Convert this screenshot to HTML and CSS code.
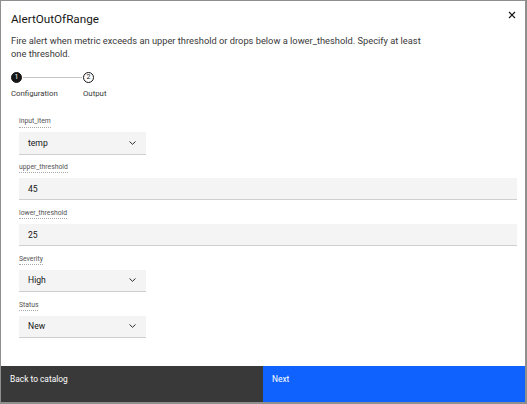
FILE: index.html
```html
<!DOCTYPE html>
<html>
<head>
<meta charset="utf-8">
<link rel="stylesheet" href="styles.css">
</head>
<body>
<div class="modal">
  <div class="header">
    <h1 class="title">AlertOutOfRange</h1>
    <span class="close" aria-label="Close">
      <svg width="8" height="8" viewBox="0 0 8 8"><path d="M1 1L7 7M7 1L1 7" stroke="#161616" stroke-width="1.1" fill="none"/></svg>
    </span>
  </div>
  <p class="desc">Fire alert when metric exceeds an upper threshold or drops below a lower_theshold. Specify at least one threshold.</p>
  <div class="steps">
    <div class="step">
      <div class="step-row"><span class="num current">1</span><span class="line"></span></div>
      <span class="step-label">Configuration</span>
    </div>
    <div class="step">
      <div class="step-row"><span class="num">2</span></div>
      <span class="step-label">Output</span>
    </div>
  </div>
  <div class="form">
    <div class="field">
      <span class="label">input_item</span>
      <div class="control select"><span>temp</span><svg class="chev" width="7" height="4" viewBox="0 0 7 4"><path d="M0.5 0.5L3.5 3.3L6.5 0.5" stroke="#161616" stroke-width="0.9" fill="none"/></svg></div>
    </div>
    <div class="field">
      <span class="label">upper_threshold</span>
      <div class="control input"><span>45</span></div>
    </div>
    <div class="field">
      <span class="label">lower_threshold</span>
      <div class="control input"><span>25</span></div>
    </div>
    <div class="field">
      <span class="label">Severity</span>
      <div class="control select"><span>High</span><svg class="chev" width="7" height="4" viewBox="0 0 7 4"><path d="M0.5 0.5L3.5 3.3L6.5 0.5" stroke="#161616" stroke-width="0.9" fill="none"/></svg></div>
    </div>
    <div class="field">
      <span class="label">Status</span>
      <div class="control select"><span>New</span><svg class="chev" width="7" height="4" viewBox="0 0 7 4"><path d="M0.5 0.5L3.5 3.3L6.5 0.5" stroke="#161616" stroke-width="0.9" fill="none"/></svg></div>
    </div>
  </div>
  <div class="footer">
    <div class="btn secondary">Back to catalog</div>
    <div class="btn primary">Next</div>
  </div>
</div>
</body>
</html>
```
FILE: styles.css
```css
html, body {
  margin: 0;
  padding: 0;
  background: #ffffff;
}
body {
  font-family: Roboto, "Liberation Sans", sans-serif;
  color: #161616;
}
.modal {
  box-sizing: border-box;
  width: 527px;
  height: 404px;
  border-top: 1px solid #8f8f8f;
  border-left: 1px solid #8f8f8f;
  border-right: 2px solid #8f8f8f;
  border-bottom: 2px solid #8f8f8f;
  display: flex;
  flex-direction: column;
  background: #fff;
}
.header {
  display: flex;
  justify-content: space-between;
  align-items: flex-start;
  padding: 10px 9px 0 10px;
}
.title {
  margin: 0;
  font-size: 11.7px;
  line-height: 16px;
  font-weight: 400;
  color: #161616;
}
.close {
  display: flex;
  margin-top: 0;
}
.desc {
  margin: 7px 0 0 10px;
  width: 425px;
  font-size: 9.3px;
  line-height: 13px;
  color: #393939;
}
.steps {
  display: flex;
  margin: 11.5px 0 0 10px;
}
.step {
  display: flex;
  flex-direction: column;
  width: 72px;
}
.step-row {
  display: flex;
  align-items: center;
  height: 11px;
}
.num {
  box-sizing: border-box;
  width: 11px;
  height: 11px;
  border-radius: 50%;
  border: 1.2px solid #161616;
  font-size: 7px;
  line-height: 9px;
  text-align: center;
  color: #161616;
  flex: none;
}
.num.current {
  background: #161616;
  color: #fff;
}
.line {
  flex: 1;
  height: 1px;
  background: #c6c6c6;
  margin: 0 1px;
}
.step-label {
  margin-top: 5px;
  font-size: 7.8px;
  line-height: 11px;
  color: #393939;
}
.form {
  display: flex;
  flex-direction: column;
  padding: 18.5px 9px 0 18px;
  gap: 8.4px;
}
.field {
  display: flex;
  flex-direction: column;
  align-items: flex-start;
  gap: 4.5px;
}
.label {
  font-size: 6.8px;
  line-height: 9.5px;
  color: #525252;
  border-bottom: 1px dotted #a8a8a8;
}
.control {
  box-sizing: border-box;
  height: 22.5px;
  background: #f4f4f4;
  border-bottom: 1.5px solid #cfcfcf;
  display: flex;
  align-items: center;
  justify-content: space-between;
  padding: 0 10px 0 9px;
  font-size: 8.6px;
  color: #161616;
}
.select {
  width: 127px;
}
.input {
  width: 498px;
}
.chev {
  display: block;
}
.footer {
  margin-top: auto;
  display: flex;
  height: 36px;
}
.btn {
  flex: 1;
  box-sizing: border-box;
  padding: 8px 9px 0 9px;
  font-size: 8.4px;
  line-height: 11px;
  color: #fff;
}
.secondary {
  background: #393939;
}
.primary {
  background: #0f62fe;
}
```
